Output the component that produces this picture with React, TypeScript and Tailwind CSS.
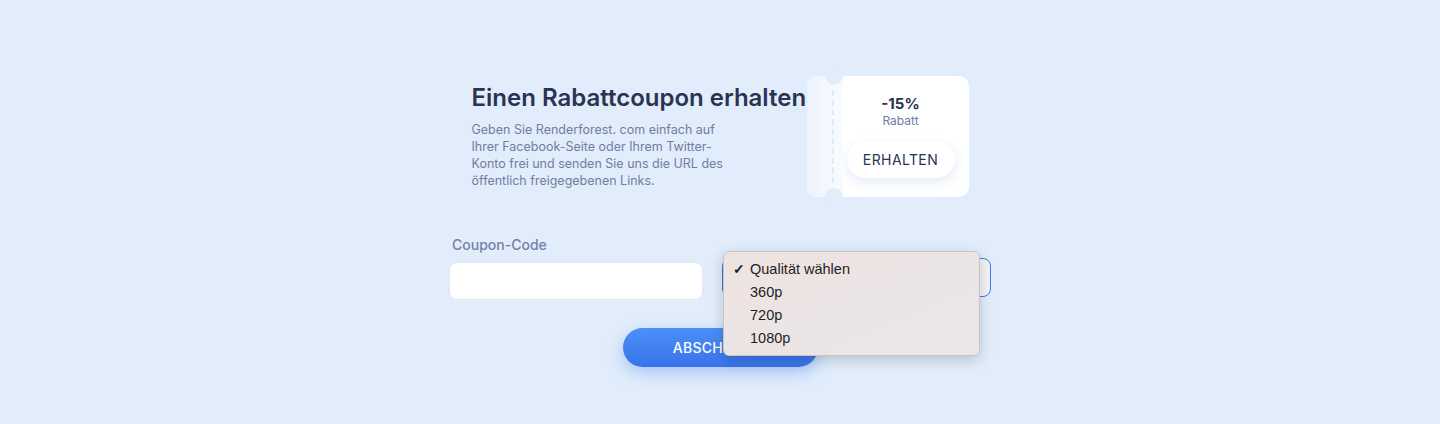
import { useState } from "react";

const font = { fontFamily: "Inter, 'Noto Sans', sans-serif" };

function Coupon() {
  return (
    <div className="relative flex h-[121px] w-[162px] rounded-[10px] bg-white">
      <div className="relative w-[36px] rounded-l-[10px] bg-gradient-to-r from-[#edf3fc] to-[#f9fbfe]">
        <div className="absolute left-[25px] top-[14px] bottom-[14px] border-l-2 border-dashed border-[#e2eaf6]" />
      </div>
      <div className="absolute left-[18px] top-[-9px] h-[18px] w-[18px] rounded-full bg-[#e1edfb]" />
      <div className="absolute left-[18px] bottom-[-9px] h-[18px] w-[18px] rounded-full bg-[#e1edfb]" />
      <div className="flex flex-1 flex-col items-center pr-[10px] pt-[19px]">
        <div className="text-[15px] font-bold leading-[18px] text-[#2a3452]">-15%</div>
        <div className="text-[12px] leading-[15px] text-[#6f7ea3]">Rabatt</div>
        <button className="mt-[13px] h-[37px] w-[108px] rounded-full bg-white text-[14px] tracking-[0.4px] text-[#2a3452] shadow-[0_4px_12px_rgba(80,120,200,0.16)]">
          ERHALTEN
        </button>
      </div>
    </div>
  );
}

function QualityMenu() {
  const options = ["Qualität wählen", "360p", "720p", "1080p"];
  return (
    <div
      className="absolute left-[1px] top-[-10px] z-10 w-[257px] rounded-[6px] border border-[#c9c4c4] bg-gradient-to-br from-[#eee3e0] to-[#e9e6ea] pb-[5px] pt-[6px] shadow-[0_4px_14px_rgba(0,0,0,0.18)]"
      style={{ fontFamily: "'Liberation Sans', Arial, sans-serif" }}
    >
      {options.map((o, i) => (
        <div key={o} className="flex h-[23px] items-center text-[14.5px] text-[#1f1f1f]">
          <span className="w-[26px] pl-[9px] text-[14px] font-bold">{i === 0 ? "✓" : ""}</span>
          {o}
        </div>
      ))}
    </div>
  );
}

export default function App() {
  const [code, setCode] = useState("");

  return (
    <div className="flex h-[424px] w-full flex-col items-center bg-[#e1edfb] pt-[76px]" style={font}>
      <div className="flex w-[497px]">
        <div className="flex flex-1 flex-col pt-[8px]">
          <h2 className="text-[24px] font-semibold leading-[28px] text-[#2a3452]">Einen Rabattcoupon erhalten</h2>
          <p className="mt-[9px] w-[264px] text-[12.5px] leading-[17px] text-[#6f7ea3]">
            Geben Sie Renderforest. com einfach auf Ihrer Facebook-Seite oder Ihrem Twitter-Konto frei und senden Sie
            uns die URL des öffentlich freigegebenen Links.
          </p>
        </div>
        <Coupon />
      </div>

      <div className="mt-[39px] flex w-[542px] flex-col">
        <label className="pl-[3px] text-[14px] font-medium leading-[18px] text-[#7281a7]">Coupon-Code</label>
        <div className="mt-[7px] flex items-start gap-[19px]">
          <input
            value={code}
            onChange={(e) => setCode(e.target.value)}
            className="mt-[1px] h-[38px] w-[254px] rounded-[8px] border border-[#dde6f3] bg-white px-3 text-[14px] outline-none"
          />
          <div className="relative">
            <div className="mt-[-3px] h-[39px] w-[269px] rounded-[8px] border border-[#3b78ec] bg-[#f4f4f6]" />
            <QualityMenu />
          </div>
        </div>
        <div className="mt-[28px] flex justify-center">
          <button className="h-[39px] w-[195px] rounded-full bg-gradient-to-b from-[#4d8ff8] to-[#3873ea] text-[14px] font-medium tracking-[0.3px] text-white shadow-[0_6px_16px_rgba(60,120,235,0.35)]">
            ABSCHICKEN
          </button>
        </div>
      </div>
    </div>
  );
}
